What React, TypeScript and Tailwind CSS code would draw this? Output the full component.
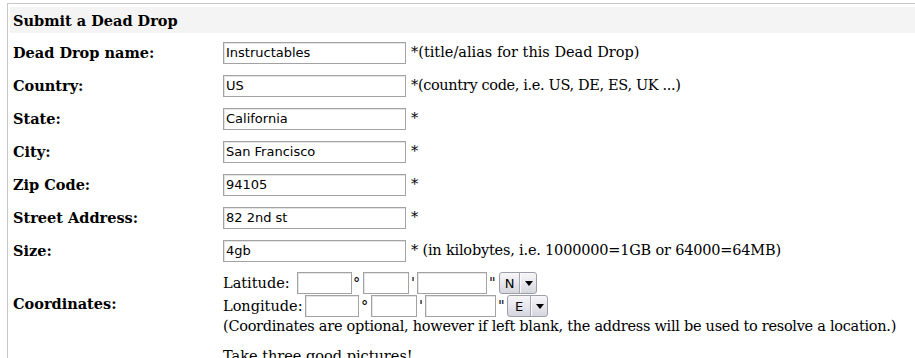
import React from "react";

const rows: [string, string, string, string][] = [
  ["Dead Drop name:", "Instructables", "*(title/alias for this Dead Drop)", "tracking-[0px]"],
  ["Country:", "US", "*(country code, i.e. US, DE, ES, UK ...)", "tracking-[-0.35px]"],
  ["State:", "California", "*", "tracking-[0px]"],
  ["City:", "San Francisco", "*", "tracking-[0px]"],
  ["Zip Code:", "94105", "*", "tracking-[0px]"],
  ["Street Address:", "82 2nd st", "*", "tracking-[0px]"],
  ["Size:", "4gb", "* (in kilobytes, i.e. 1000000=1GB or 64000=64MB)", "tracking-[-0.2px]"],
];

function TextInput({ value, w }: { value?: string; w: string }) {
  return (
    <input
      type="text"
      defaultValue={value}
      className={`${w} h-[22px] shrink-0 border border-[#a3a3a3] bg-white px-[2px] text-[13px] text-black outline-none [font-family:'DejaVu_Sans',sans-serif] shadow-[inset_1px_1px_0_#e4e4e4]`}
    />
  );
}

function Dir({ letter, leftW, w }: { letter: string; leftW: string; w: string }) {
  return (
    <div
      className={`${w} h-[22px] shrink-0 flex rounded-[3px] border border-[#9d9dab] bg-gradient-to-b from-[#f7f7fa] to-[#d6d6de] [font-family:'DejaVu_Sans',sans-serif] text-[13px] text-black`}
    >
      <div className={`${leftW} flex items-center justify-center border-r border-[#a6a6b2]`}>{letter}</div>
      <div className="flex flex-1 items-center justify-center border-l border-[#fafafc]">
        <svg width="8" height="5" viewBox="0 0 8 5">
          <path d="M0 0 H8 L4 5 Z" fill="#000" />
        </svg>
      </div>
    </div>
  );
}

export default function App() {
  return (
    <div className="h-[358px] overflow-hidden bg-white pt-[3px] pl-[7px] text-[14.5px] leading-[17px] text-black [font-family:'DejaVu_Serif',serif]">
      <div className="h-full border-t border-l border-[#c8c8c8] pt-[3px] pl-[2px]">
        <div className="flex h-[26px] items-center bg-[#f4f4f4] pl-[3px] font-bold">Submit a Dead Drop</div>
        <div className="pt-[3px]">
          {rows.map(([label, value, note, tr]) => (
            <div key={label} className="flex h-[33px] items-center">
              <div className="w-[213px] shrink-0 pl-[3px] font-bold">{label}</div>
              <TextInput value={value} w="w-[183px]" />
              <span className={`ml-[5px] whitespace-nowrap ${tr}`}>{note}</span>
            </div>
          ))}
          <div className="flex">
            <div className="flex w-[213px] shrink-0 items-center pl-[3px] font-bold">Coordinates:</div>
            <div className="flex flex-col pt-[5px] pb-[4px]">
              <div className="flex h-[22px] items-center">
                <span className="w-[74px] shrink-0">Latitude:</span>
                <TextInput w="w-[55px]" />
                <span className="w-[11px] shrink-0 pl-[1px]">°</span>
                <TextInput w="w-[46px]" />
                <span className="w-[8px] shrink-0 pl-[2px]">'</span>
                <TextInput w="w-[70px]" />
                <span className="w-[12px] shrink-0 pl-[2px]">"</span>
                <Dir letter="N" leftW="w-[20px]" w="w-[38px]" />
              </div>
              <div className="mt-[1px] flex h-[22px] items-center">
                <span className="w-[82px] shrink-0">Longitude:</span>
                <TextInput w="w-[54px]" />
                <span className="w-[12px] shrink-0 pl-[2px]">°</span>
                <TextInput w="w-[46px]" />
                <span className="w-[8px] shrink-0 pl-[2px]">'</span>
                <TextInput w="w-[71px]" />
                <span className="w-[11px] shrink-0 pl-[2px]">"</span>
                <Dir letter="E" leftW="w-[23px]" w="w-[41px]" />
              </div>
              <div className="mt-[1px] whitespace-nowrap tracking-[-0.28px]">
                (Coordinates are optional, however if left blank, the address will be used to resolve a location.)
              </div>
            </div>
          </div>
          <div className="flex pt-[9px]">
            <div className="w-[213px] shrink-0" />
            <div>Take three good pictures!</div>
          </div>
        </div>
      </div>
    </div>
  );
}
